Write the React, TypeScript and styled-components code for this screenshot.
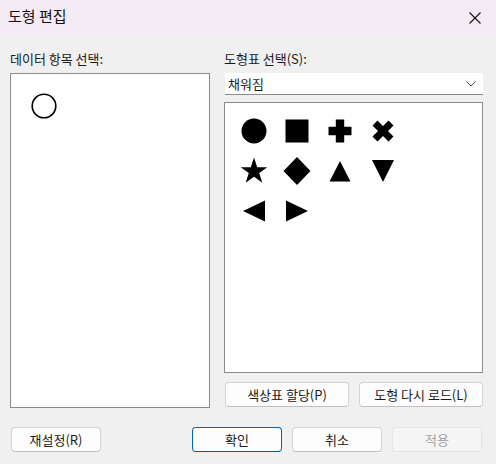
import React from "react";
import styled, { createGlobalStyle } from "styled-components";

const GlobalStyle = createGlobalStyle`
  html, body {
    margin: 0;
    padding: 0;
    background: #f0f0f0;
  }
  body {
    font-family: "Noto Sans CJK KR", "Noto Sans", sans-serif;
    font-size: 13px;
    color: #1a1a1a;
  }
`;

type ShapeKind =
  | "circle"
  | "square"
  | "plus"
  | "cross"
  | "star"
  | "diamond"
  | "up"
  | "down"
  | "left"
  | "right";

const SHAPES: ShapeKind[] = [
  "circle",
  "square",
  "plus",
  "cross",
  "star",
  "diamond",
  "up",
  "down",
  "left",
  "right",
];

function ShapeIcon({ kind }: { kind: ShapeKind }): JSX.Element {
  let body: JSX.Element;
  switch (kind) {
    case "circle":
      body = <circle cx="14" cy="14" r="12.5" />;
      break;
    case "square":
      body = <rect x="2.5" y="2.5" width="23" height="23" />;
      break;
    case "plus":
      body = <path d="M9.8 2.5h8.4v7.3h7.3v8.4h-7.3v7.3H9.8v-7.3H2.5V9.8h7.3z" />;
      break;
    case "cross":
      body = (
        <path d="M3.5 8.5 8.5 3.5 14 9 19.5 3.5 24.5 8.5 19 14 24.5 19.5 19.5 24.5 14 19 8.5 24.5 3.5 19.5 9 14z" />
      );
      break;
    case "star":
      body = (
        <path d="M14 0.5 17.2 10.2 27.3 10.2 19.2 16.1 22.3 25.8 14 19.8 5.7 25.8 8.8 16.1 0.7 10.2 10.8 10.2z" />
      );
      break;
    case "diamond":
      body = <path d="M14 0 27.5 14 14 28 0.5 14z" />;
      break;
    case "up":
      body = <path d="M14 4 24.5 24.5 3.5 24.5z" />;
      break;
    case "down":
      body = <path d="M3 3 25 3 14 25z" />;
      break;
    case "left":
      body = <path d="M3 14 25 3.5 25 24.5z" />;
      break;
    default:
      body = <path d="M3 3.5 25 14 3 24.5z" />;
  }
  return (
    <svg width="28" height="28" viewBox="0 0 28 28" fill="#000">
      {body}
    </svg>
  );
}

function App(): JSX.Element {
  return (
    <Window>
      <GlobalStyle />
      <TitleBar>
        <Title>도형 편집</Title>
        <CloseButton aria-label="닫기">
          <svg width="14" height="14" viewBox="0 0 14 14">
            <path d="M1.5 1.5l11 11M12.5 1.5l-11 11" stroke="#111" strokeWidth="1.1" />
          </svg>
        </CloseButton>
      </TitleBar>

      <Content>
        <Column>
          <Label>데이터 항목 선택:</Label>
          <ItemList>
            <svg width="28" height="28" viewBox="0 0 28 28">
              <circle cx="14" cy="14" r="11.8" fill="none" stroke="#000" strokeWidth="1.6" />
            </svg>
          </ItemList>
        </Column>

        <Column>
          <Label>도형표 선택(S):</Label>
          <Combo>
            <span>채워짐</span>
            <svg width="10" height="6" viewBox="0 0 10 6">
              <path d="M0.5 0.5 5 5 9.5 0.5" fill="none" stroke="#555" strokeWidth="1" />
            </svg>
          </Combo>
          <ShapeBox>
            {SHAPES.map((s) => (
              <ShapeCell key={s}>
                <ShapeIcon kind={s} />
              </ShapeCell>
            ))}
          </ShapeBox>
          <ButtonRow>
            <Button $wide>색상표 할당(P)</Button>
            <Button $wide>도형 다시 로드(L)</Button>
          </ButtonRow>
        </Column>
      </Content>

      <Footer>
        <Button>재설정(R)</Button>
        <FooterRight>
          <Button $primary>확인</Button>
          <Button>취소</Button>
          <Button disabled>적용</Button>
        </FooterRight>
      </Footer>
    </Window>
  );
}

const Window = styled.div`
  width: 496px;
  height: 464px;
  background: #f0f0f0;
  display: flex;
  flex-direction: column;
  overflow: hidden;
`;

const TitleBar = styled.div`
  height: 36px;
  flex-shrink: 0;
  background: #f5ebf5;
  display: flex;
  align-items: center;
  justify-content: space-between;
  padding: 0 8px;
  box-sizing: border-box;
  border-top-right-radius: 8px;
`;

const Title = styled.div`
  font-size: 15px;
  color: #111;
  margin-top: -5px;
`;

const CloseButton = styled.button`
  width: 30px;
  height: 30px;
  border: none;
  background: transparent;
  display: flex;
  align-items: center;
  justify-content: center;
  padding: 0;
  margin-right: -2px;
  margin-top: -1px;
`;

const Content = styled.div`
  display: grid;
  grid-template-columns: 200px 259px;
  column-gap: 14px;
  padding: 12px 0 0 10px;
`;

const Column = styled.div`
  display: flex;
  flex-direction: column;
`;

const Label = styled.div`
  height: 22px;
  line-height: 22px;
  margin-bottom: 3px;
  font-size: 13px;
`;

const ItemList = styled.div`
  height: 335px;
  box-sizing: border-box;
  background: #fff;
  border: 1px solid #8b8b94;
  padding: 18px 0 0 19px;
`;

const Combo = styled.div`
  height: 22px;
  box-sizing: border-box;
  background: #fff;
  border-bottom: 1px solid #8a8a8a;
  display: flex;
  align-items: center;
  justify-content: space-between;
  padding: 0 7px 0 3px;
  margin-left: 1px;
  font-size: 13px;
`;

const ShapeBox = styled.div`
  margin-top: 7px;
  height: 271px;
  box-sizing: border-box;
  background: #fff;
  border: 1px solid #8b8b94;
  display: grid;
  grid-template-columns: repeat(4, 43px);
  grid-auto-rows: 40px;
  align-content: start;
  padding: 8px 0 0 7px;
`;

const ShapeCell = styled.div`
  display: flex;
  align-items: center;
  justify-content: center;
`;

const ButtonRow = styled.div`
  margin-top: 9px;
  display: flex;
  justify-content: space-between;
  padding-left: 1px;
`;

const Button = styled.button<{ $primary?: boolean; $wide?: boolean }>`
  width: ${(p) => (p.$wide ? "124px" : "90px")};
  height: 25px;
  box-sizing: border-box;
  border-radius: 4px;
  font-family: "Noto Sans CJK KR", "Noto Sans", sans-serif;
  font-size: 13px;
  color: #1a1a1a;
  background: #fdfdfd;
  border: 1px solid ${(p) => (p.$primary ? "#0067c0" : "#d3d3d3")};
  border-bottom-color: ${(p) => (p.$primary ? "#0058a8" : "#c0c0c0")};
  padding: 0;
  line-height: 22px;

  &:disabled {
    background: #f5f5f5;
    border-color: #e5e5e5;
    color: #a0a0a0;
  }
`;

const Footer = styled.div`
  margin-top: 19px;
  display: flex;
  justify-content: space-between;
  padding: 0 14px 0 11px;
`;

const FooterRight = styled.div`
  display: flex;
  gap: 10px;
`;

export default App;
